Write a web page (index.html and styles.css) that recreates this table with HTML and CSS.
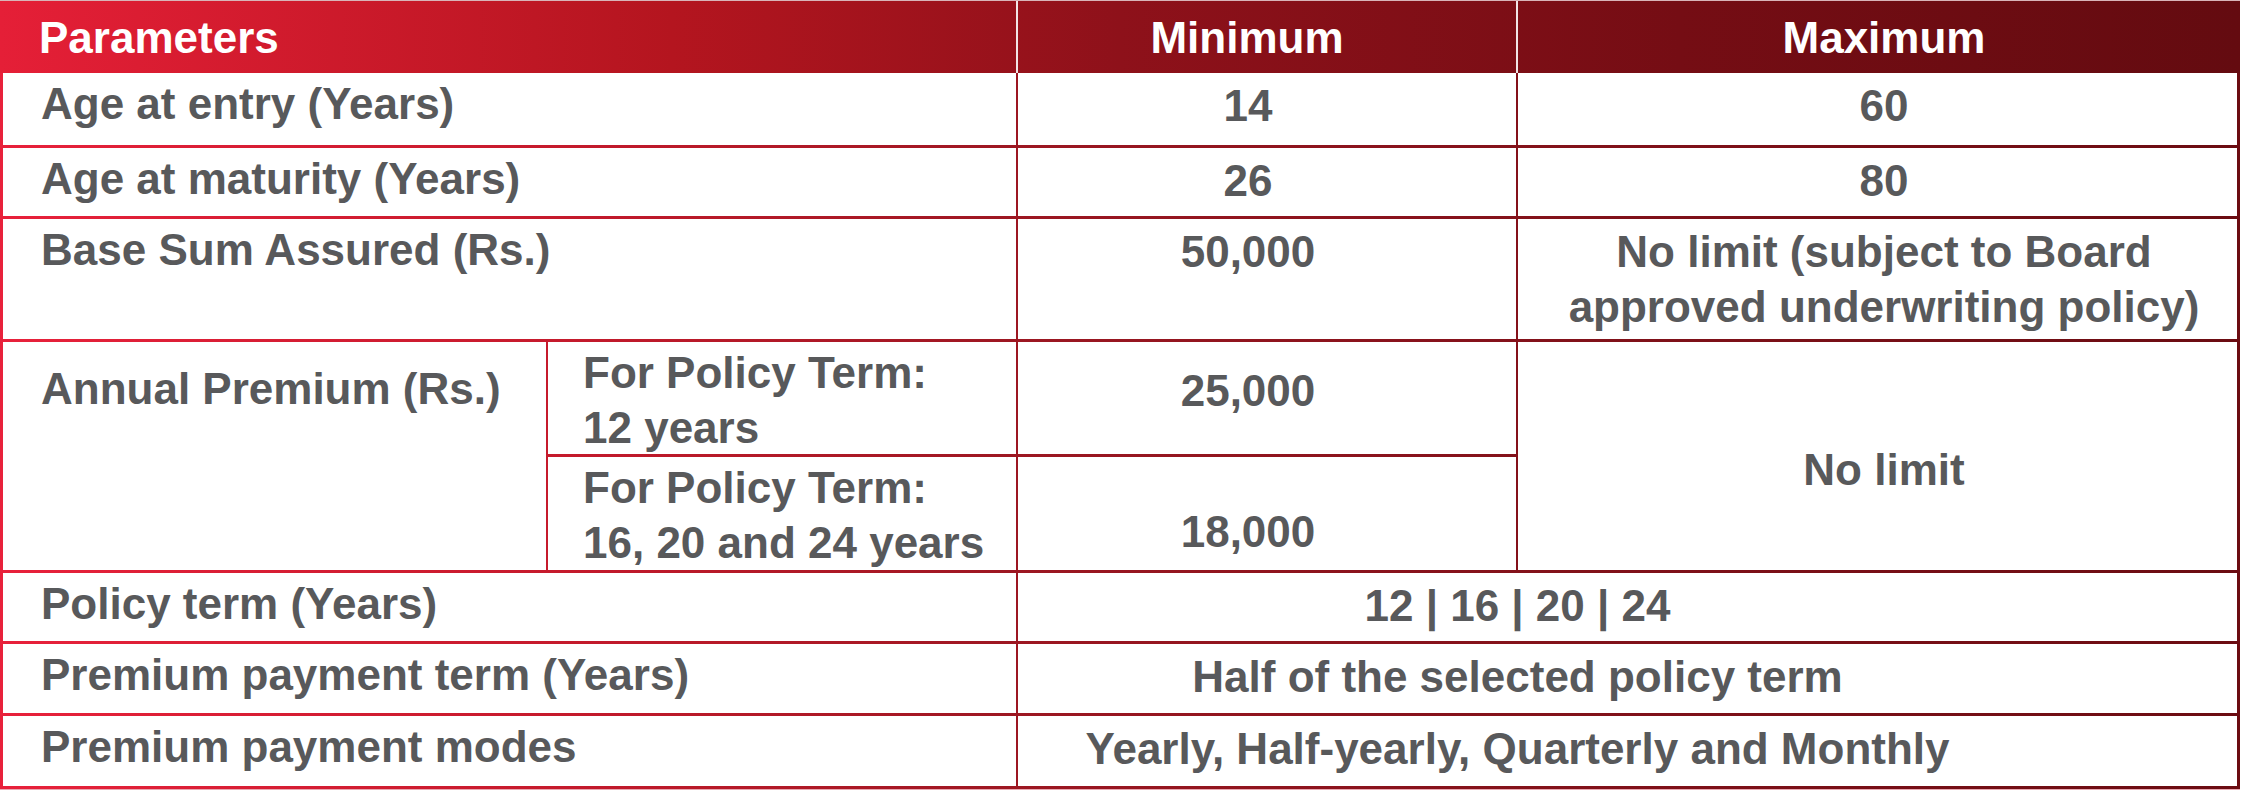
FILE: index.html
```html
<!DOCTYPE html>
<html lang="en">
<head>
<meta charset="utf-8">
<title>Eligibility parameters</title>
<link rel="stylesheet" href="styles.css">
</head>
<body>
<div class="sheet">
  <div class="head">
    <div class="h h-param">Parameters</div>
    <div class="h h-min">Minimum</div>
    <div class="h h-max">Maximum</div>
  </div>
  <div class="grid">
    <div class="c label wide-label">Age at entry (Years)</div>
    <div class="c min">14</div>
    <div class="c max">60</div>

    <div class="c label wide-label">Age at maturity (Years)</div>
    <div class="c min">26</div>
    <div class="c max">80</div>

    <div class="c label wide-label">Base Sum Assured (Rs.)</div>
    <div class="c min">50,000</div>
    <div class="c max">No limit (subject to Board<br>approved underwriting policy)</div>

    <div class="c label annual">Annual Premium (Rs.)</div>
    <div class="c sub">For Policy Term:<br>12 years</div>
    <div class="c min v-first">25,000</div>
    <div class="c max no-limit">No limit</div>
    <div class="c sub">For Policy Term:<br>16, 20 and 24 years</div>
    <div class="c min v-second">18,000</div>

    <div class="c label wide-label">Policy term (Years)</div>
    <div class="c value-wide">12 | 16 | 20 | 24</div>

    <div class="c label wide-label">Premium payment term (Years)</div>
    <div class="c value-wide">Half of the selected policy term</div>

    <div class="c label wide-label">Premium payment modes</div>
    <div class="c value-wide">Yearly, Half-yearly, Quarterly and Monthly</div>
  </div>
</div>
</body>
</html>
```

FILE: styles.css
```css
html, body {
  margin: 0;
  padding: 0;
  background: #ffffff;
}

.sheet {
  width: 2240px;
  font-family: "Liberation Sans", Arial, sans-serif;
  font-weight: 700;
  font-size: 44px;
  line-height: 55px;
  color: #58595b;
}

.head {
  display: flex;
  height: 72px;
  border-top: 1px solid #d9b4b8;
  background: linear-gradient(90deg, #e51f37 0%, #b4151f 30%, #8e111a 50%, #750d14 75%, #640b10 100%);
  color: #ffffff;
}

.h {
  box-sizing: border-box;
  padding-top: 9px;
}

.h-param {
  width: 1016px;
  padding-left: 39px;
}

.h-min {
  width: 500px;
  border-left: 2px solid #f1e4e5;
  text-align: center;
  padding-right: 40px;
}

.h-max {
  flex: 1;
  border-left: 2px solid #f1e4e5;
  text-align: center;
  padding-left: 10px;
}

.grid {
  display: grid;
  grid-template-columns: 543px 468px 498px 719px;
  grid-template-rows: 72px 68px 120px 112px 113px 68px 69px 70px;
  column-gap: 2px;
  row-gap: 3px;
  padding: 0 3px 3px 3px;
  background: linear-gradient(90deg, #e8213b 0%, #c51a2c 25%, #9d1722 45%, #86121b 65%, #6b0c12 100%);
  border-bottom: 1px solid #e9a9b2;
}

.c {
  background: #ffffff;
  box-sizing: border-box;
  white-space: nowrap;
}

.label {
  padding-left: 38px;
  padding-top: 3px;
}

.wide-label {
  grid-column: 1 / 3;
}

.annual {
  grid-column: 1;
  grid-row: span 2;
  padding-top: 19px;
}

.sub {
  grid-column: 2;
  padding-left: 35px;
  padding-top: 3px;
}

.min {
  grid-column: 3;
  text-align: center;
  padding-right: 38px;
  padding-top: 5px;
}

.max {
  grid-column: 4;
  text-align: center;
  padding-left: 13px;
  padding-top: 5px;
}

.v-first {
  padding-top: 21px;
}

.v-second {
  padding-top: 47px;
}

.no-limit {
  grid-row: span 2;
  padding-top: 100px;
}

.value-wide {
  grid-column: 3 / 5;
  text-align: center;
  padding-right: 220px;
  padding-top: 5px;
}
```
